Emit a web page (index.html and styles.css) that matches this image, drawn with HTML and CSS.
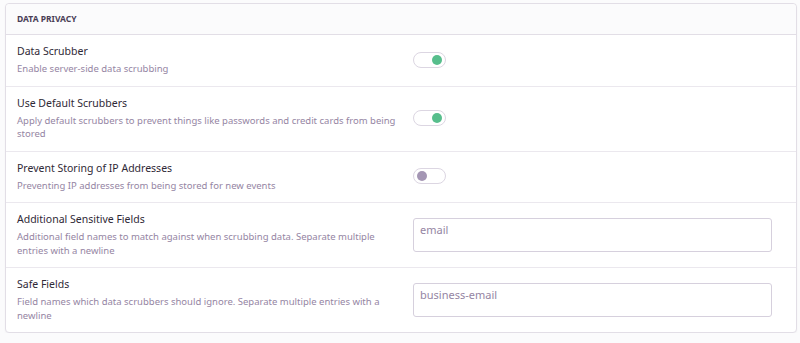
FILE: index.html
```html
<!DOCTYPE html>
<html lang="en">
<head>
    <meta charset="UTF-8">
    <meta name="viewport" content="width=device-width, initial-scale=1.0">
    <title>Data Privacy</title>
    <link rel="stylesheet" href="styles.css">
</head>
<body>
    <div class="panel">
        <div class="panel-header">Data Privacy</div>

        <div class="field">
            <div class="field-label">
                <div class="field-title">Data Scrubber</div>
                <div class="field-help">Enable server-side data scrubbing</div>
            </div>
            <div class="field-control">
                <span class="switch on"><span class="knob"></span></span>
            </div>
        </div>

        <div class="field">
            <div class="field-label">
                <div class="field-title">Use Default Scrubbers</div>
                <div class="field-help">Apply default scrubbers to prevent things like passwords and credit cards from being stored</div>
            </div>
            <div class="field-control">
                <span class="switch on"><span class="knob"></span></span>
            </div>
        </div>

        <div class="field">
            <div class="field-label">
                <div class="field-title">Prevent Storing of IP Addresses</div>
                <div class="field-help">Preventing IP addresses from being stored for new events</div>
            </div>
            <div class="field-control">
                <span class="switch"><span class="knob"></span></span>
            </div>
        </div>

        <div class="field">
            <div class="field-label">
                <div class="field-title">Additional Sensitive Fields</div>
                <div class="field-help">Additional field names to match against when scrubbing data. Separate multiple entries with a newline</div>
            </div>
            <div class="field-control">
                <textarea class="textarea">email</textarea>
            </div>
        </div>

        <div class="field">
            <div class="field-label">
                <div class="field-title">Safe Fields</div>
                <div class="field-help">Field names which data scrubbers should ignore. Separate multiple entries with a newline</div>
            </div>
            <div class="field-control">
                <textarea class="textarea">business-email</textarea>
            </div>
        </div>
    </div>
</body>
</html>
```

FILE: styles.css
```css
body {
    margin: 0;
    padding: 3px 3px 0 5px;
    background-color: #fbfbfc;
    font-family: "Noto Sans", sans-serif;
    color: #2f2936;
}
.panel {
    background: white;
    border: 1px solid #e2dee6;
    border-radius: 4px;
    box-shadow: 0 1px 2px rgba(0, 0, 0, 0.04);
}
.panel-header {
    background-color: #fbfbfc;
    border-bottom: 1px solid #e2dee6;
    border-radius: 4px 4px 0 0;
    padding: 0 11px;
    height: 30px;
    line-height: 30px;
    font-size: 8.5px;
    font-weight: bold;
    text-transform: uppercase;
    color: #4a3e56;
}
.field {
    display: flex;
    align-items: center;
    padding: 9px 0 10px 11px;
    border-bottom: 1px solid #ebe8ee;
}
.field:last-child {
    border-bottom: none;
}
.field-label {
    flex: 0 0 384px;
    padding-right: 12px;
}
.field-title {
    font-size: 10.5px;
    line-height: 14px;
    margin-bottom: 4px;
}
.field-help {
    font-size: 9.5px;
    line-height: 13.5px;
    color: #9585a3;
}
.field-control {
    width: 359px;
}
.switch {
    display: block;
    position: relative;
    width: 31px;
    height: 14px;
    border: 1px solid #dcd6e2;
    border-radius: 9px;
}
.knob {
    position: absolute;
    top: 2px;
    left: 3px;
    width: 10px;
    height: 10px;
    border-radius: 50%;
    background-color: #a496b4;
}
.switch.on .knob {
    left: auto;
    right: 3px;
    background-color: #57be8c;
}
.textarea {
    display: block;
    box-sizing: border-box;
    width: 359px;
    height: 34px;
    padding: 3px 6px;
    border: 1px solid #d6d0dd;
    border-radius: 3px;
    font-family: inherit;
    font-size: 11px;
    line-height: 16px;
    color: #9585a3;
    resize: none;
    outline: none;
}
```
